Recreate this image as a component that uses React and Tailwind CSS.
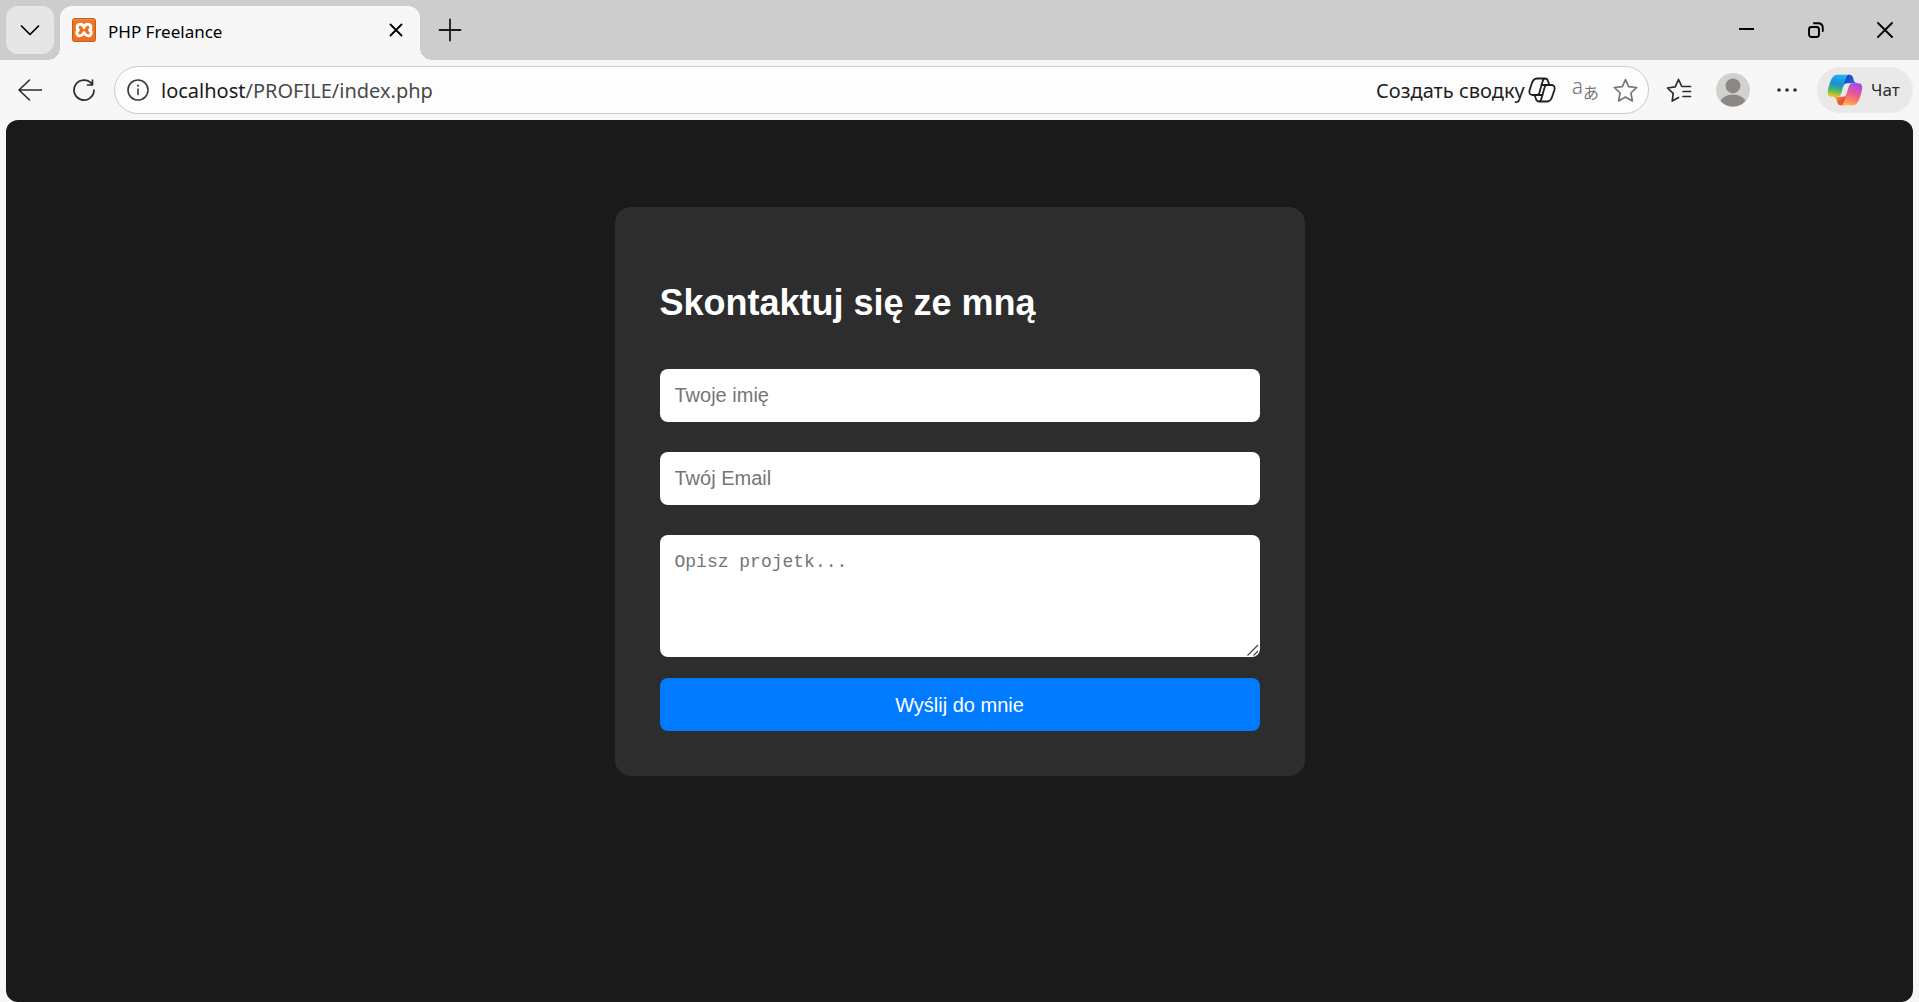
function Stroke({ size, box = "0 0 24 24", width = 1.5, children }) {
  return (
    <svg
      width={size}
      height={size}
      viewBox={box}
      fill="none"
      stroke="currentColor"
      strokeWidth={width}
      strokeLinecap="round"
      strokeLinejoin="round"
      aria-hidden="true"
    >
      {children}
    </svg>
  );
}

const STAR =
  "M12 1.5 L15 8.3 L22.8 9.1 L17.2 14.4 L18.6 22 L12 18.3 L5.4 22 L6.8 14.4 L1.2 9.1 L9 8.3 Z";

function XamppIcon() {
  return (
    <svg width="24" height="24" viewBox="0 0 24 24" aria-hidden="true">
      <defs>
        <linearGradient id="xamppFill" x1="0" y1="0" x2="0" y2="24" gradientUnits="userSpaceOnUse">
          <stop offset="0" stopColor="#e89a62" />
          <stop offset="0.15" stopColor="#f0741f" />
          <stop offset="1" stopColor="#f0701a" />
        </linearGradient>
      </defs>
      <rect x="0.5" y="0.5" width="23" height="23" rx="2" fill="url(#xamppFill)" stroke="#b9632c" />
      <path
        d="M12 9.400 C11.400 8.400 11.200 6.200 8.500 6.200 C5 6.200 4 9.600 6.400 12 C3.600 14.400 4.600 17.800 8 17.800 C11 17.800 11 15.400 12 14.600 C13 15.400 13 17.800 16 17.800 C19.400 17.800 20.400 14.400 17.600 12 C20 9.600 19 6.200 15.500 6.200 C12.800 6.200 12.600 8.400 12 9.400 Z"
        fill="#f0701a"
        stroke="#fff"
        strokeWidth="3"
        strokeLinejoin="round"
      />
      <path d="M9.500 9.500 V14.500 M14.500 9.500 V14.500 M9.500 12 H14.500" stroke="#f0701a" strokeWidth="1.500" fill="none" />
    </svg>
  );
}

function CopilotLogo() {
  return (
    <svg width="36" height="32" viewBox="1 3 46 42" preserveAspectRatio="none" aria-hidden="true">
      <defs>
        <linearGradient id="foldTop" x1="24" y1="6" x2="38" y2="16" gradientUnits="userSpaceOnUse">
          <stop offset="0" stopColor="#1b3fc4" />
          <stop offset="1" stopColor="#2a6be0" />
        </linearGradient>
        <linearGradient id="foldBottom" x1="12" y1="32" x2="24" y2="44" gradientUnits="userSpaceOnUse">
          <stop offset="0" stopColor="#f7a13a" />
          <stop offset="0.5" stopColor="#ee5a3a" />
          <stop offset="1" stopColor="#e2453f" />
        </linearGradient>
        <linearGradient id="ribbonLeft" x1="15" y1="4" x2="10" y2="33" gradientUnits="userSpaceOnUse">
          <stop offset="0" stopColor="#1fb0f0" />
          <stop offset="0.4" stopColor="#1690d8" />
          <stop offset="0.7" stopColor="#4fb568" />
          <stop offset="1" stopColor="#f2cb16" />
        </linearGradient>
        <linearGradient id="ribbonRight" x1="40" y1="15" x2="30" y2="44" gradientUnits="userSpaceOnUse">
          <stop offset="0" stopColor="#9a4cf0" />
          <stop offset="0.45" stopColor="#e8559a" />
          <stop offset="0.75" stopColor="#fb7a68" />
          <stop offset="1" stopColor="#ffb04a" />
        </linearGradient>
      </defs>
      <path
        fill="url(#foldTop)"
        d="M34.142 7.325A4.63 4.63 0 0 0 29.7 4H28.35a4.63 4.63 0 0 0-4.554 3.794L21.48 20.407l.575-1.965a4.63 4.63 0 0 1 4.444-3.33h7.853l3.294 1.282 3.175-1.283h-.926a4.63 4.63 0 0 1-4.443-3.325z"
      />
      <path
        fill="url(#foldBottom)"
        d="M14.33 40.656A4.63 4.63 0 0 0 18.779 44h2.87a4.63 4.63 0 0 0 4.629-4.51l.312-12.163-.654 2.233a4.63 4.63 0 0 1-4.443 3.329h-7.919l-2.823-1.532-3.057 1.532h.912a4.63 4.63 0 0 1 4.447 3.344z"
      />
      <path
        fill="url(#ribbonLeft)"
        d="M29.5 4H13.46c-4.583 0-7.332 6.057-9.165 12.113C2.123 23.29-.72 32.885 7.503 32.885h6.925a4.67 4.67 0 0 0 4.489-3.379 2004 2004 0 0 1 4.766-16.4c.807-2.743 1.48-5.1 2.512-6.566C26.773 5.717 27.737 4 29.5 4"
      />
      <path
        fill="url(#ribbonRight)"
        d="M18.496 44h16.039c4.583 0 7.332-6.058 9.165-12.115 2.172-7.177 5.013-16.775-3.208-16.775h-6.926a4.67 4.67 0 0 0-4.489 3.379 2004 2004 0 0 1-4.766 16.402c-.807 2.743-1.48 5.1-2.512 6.567-.579.822-1.541 2.542-3.303 2.542"
      />
    </svg>
  );
}

function CopilotOutline() {
  return (
    <svg
      width="28"
      height="26"
      viewBox="0 0 28 26"
      fill="none"
      stroke="currentColor"
      strokeWidth="1.8"
      strokeLinecap="round"
      strokeLinejoin="round"
      aria-hidden="true"
    >
      <path d="M17 1.5 H9 C6 1.5 4.6 3.6 3.6 7 L1.6 13 C.8 16 1.8 18 4.6 18 H8.6 C10 18 10.9 17.2 11.3 16 L14.4 5 C14.9 3 15.6 1.5 17 1.5 C18.8 1.5 19.6 2.6 20 4 L20.8 6.4 C21.1 7.4 21.6 8 22.6 8" />
      <path d="M11 24.5 H19 C22 24.5 23.4 22.4 24.4 19 L26.4 13 C27.2 10 26.2 8 23.4 8 H19.4 C18 8 17.1 8.800 16.700 10 L13.600 21 C13.100 23 12.400 24.500 11 24.500 C9.200 24.500 8.400 23.400 8 22 L7.200 19.600 C6.900 18.600 6.400 18 5.400 18" />
      <path d="M13.600 8 H19.400 M8.600 18 H14.400" />
    </svg>
  );
}

function IconButton({ label, className = "", children }) {
  return (
    <button
      type="button"
      aria-label={label}
      className={`flex h-12 shrink-0 items-center justify-center ${className}`}
    >
      {children}
    </button>
  );
}

function TabStrip() {
  return (
    <div className="flex h-[60px] shrink-0 items-center bg-[#cdcdcd] pl-1.5">
      <IconButton label="Карточки" className="w-12 rounded-xl bg-[#e6e6e6] text-black">
        <Stroke size={24} width={1.7}>
          <path d="M3.500 8 L12 16.500 L20.500 8" />
        </Stroke>
      </IconButton>
      <div className="relative ml-1.5 flex h-[54px] w-[360px] items-center self-end rounded-t-xl bg-[#f7f7f7] pb-1.5 pl-3 pr-3">
        <span className="absolute -left-3 bottom-0 size-3 bg-[radial-gradient(circle_at_0_0,transparent_12px,#f7f7f7_12px)]" />
        <span className="absolute -right-3 bottom-0 size-3 bg-[radial-gradient(circle_at_100%_0,transparent_12px,#f7f7f7_12px)]" />
        <XamppIcon />
        <span className="ml-3 grow pt-1 text-[17px] leading-6 text-black">PHP Freelance</span>
        <button type="button" aria-label="Закрыть вкладку" className="flex size-6 items-center justify-center text-black">
          <Stroke size={14} box="0 0 14 14" width={1.8}>
            <path d="M1.500 1.500 L12.500 12.500 M12.500 1.500 L1.500 12.500" />
          </Stroke>
        </button>
      </div>
      <IconButton label="Новая вкладка" className="ml-1.5 w-12 text-[#1a1a1a]">
        <Stroke size={24} width={1.8}>
          <path d="M12 1.500 V22.500 M1.500 12 H22.500" />
        </Stroke>
      </IconButton>
      <div className="ml-auto flex text-black">
        <IconButton label="Свернуть" className="w-[69px]">
          <svg width="16" height="16" aria-hidden="true">
            <path d="M0 7 H15" stroke="currentColor" strokeWidth="2" />
          </svg>
        </IconButton>
        <IconButton label="Восстановить" className="w-[69px]">
          <Stroke size={16} box="0 0 16 16" width={1.900}>
            <rect x="1" y="5" width="10" height="10" rx="2.500" />
            <path d="M6 1.200 H10 Q14.800 1.200 14.800 6 V9" />
          </Stroke>
        </IconButton>
        <IconButton label="Закрыть" className="w-[69px]">
          <Stroke size={16} box="0 0 16 16" width={1.900}>
            <path d="M1 1 L15 15 M15 1 L1 15" />
          </Stroke>
        </IconButton>
      </div>
    </div>
  );
}

function Toolbar() {
  return (
    <div className="flex h-[60px] shrink-0 items-center gap-1.5 px-1.5 text-[#2b2b2b]">
      <IconButton label="Назад" className="w-12">
        <Stroke size={24} width={1.600}>
          <path d="M23.500 12 H1 M11.500 2 L1 12 L11.500 22" />
        </Stroke>
      </IconButton>
      <IconButton label="Обновить" className="w-12">
        <Stroke size={24} width={1.700}>
          <path d="M22 12 A10 10 0 1 1 19.800 5.800 M20.500 2 V7 H15.500" />
        </Stroke>
      </IconButton>
      <div className="flex h-12 min-w-0 grow items-center rounded-full border border-[#cbcbcb] bg-[#fdfdfd] pl-3 pr-2.5">
        <button type="button" aria-label="Сведения о сайте" className="text-[#3b3b3b]">
          <Stroke size={22} box="0 0 22 22" width={1.600}>
            <circle cx="11" cy="11" r="10" />
            <path d="M11 10 V15.500" />
            <path d="M11 6.600 V6.700" strokeWidth="2" />
          </Stroke>
        </button>
        <div className="ml-3 grow pt-0.5 text-[20px] leading-7 text-[#4a4a4a]">
          <span className="text-[#1a1a1a]">localhost</span>/PROFILE/index.php
        </div>
        <button type="button" className="flex items-center gap-[3px] text-[20px] leading-7 text-[#1f1f1f]">
          <span className="pt-0.5">Создать сводку</span>
          <CopilotOutline />
        </button>
        <button
          type="button"
          aria-label="Перевести"
          className="ml-4 flex items-center text-[21px] font-light leading-6 text-[#757575]"
        >
          <span className="pb-2">a</span>
          <span className="pt-1 font-['Noto_Sans_CJK_JP',sans-serif] text-[16px] font-normal">あ</span>
        </button>
        <button type="button" aria-label="Добавить в избранное" className="ml-3.5 text-[#757575]">
          <Stroke size={25} width={1.600}>
            <path d={STAR} />
          </Stroke>
        </button>
      </div>
      <IconButton label="Избранное" className="w-12">
        <svg
          width="26"
          height="25"
          viewBox="0 0 26 25"
          fill="none"
          stroke="currentColor"
          strokeWidth="1.700"
          strokeLinecap="round"
          strokeLinejoin="round"
          aria-hidden="true"
        >
          <path d="M12.500 19.500 L6.200 23 L7.200 15.400 L1.500 10 L9.200 8.800 L12.500 1.500 L15.800 8.500 H24.500 M17 13.500 H24.500 M17 18.500 H24.500" />
        </svg>
      </IconButton>
      <IconButton label="Профиль" className="w-12">
        <svg width="34" height="34" viewBox="0 0 34 34" aria-hidden="true">
          <clipPath id="avatarClip">
            <circle cx="17" cy="17" r="16.500" />
          </clipPath>
          <circle cx="17" cy="17" r="17" fill="#d3d1ce" />
          <g clipPath="url(#avatarClip)" fill="#8c8885">
            <circle cx="17" cy="12.800" r="7.400" />
            <ellipse cx="17" cy="31.500" rx="13.500" ry="10" />
          </g>
        </svg>
      </IconButton>
      <IconButton label="Настройки и прочее" className="w-12">
        <svg width="20" height="4" viewBox="0 0 20 4" fill="currentColor" aria-hidden="true">
          <circle cx="2" cy="2" r="1.800" />
          <circle cx="10" cy="2" r="1.800" />
          <circle cx="18" cy="2" r="1.800" />
        </svg>
      </IconButton>
      <button
        type="button"
        className="flex h-[46px] w-24 shrink-0 items-center gap-2 rounded-full bg-[#e9e9e9] pl-2.5 text-[17px] leading-6"
      >
        <CopilotLogo />
        Чат
      </button>
    </div>
  );
}

function ContactForm() {
  return (
    <form
      className="w-full max-w-[690px] rounded-2xl bg-[#2d2d2d] p-[45px] font-['Liberation_Sans',Arial,sans-serif] text-[20px]"
      onSubmit={(event) => event.preventDefault()}
    >
      <h1 className="mt-[30px] text-4xl font-bold leading-[42px] text-white">Skontaktuj się ze mną</h1>
      <input
        type="text"
        aria-label="Twoje imię"
        placeholder="Twoje imię"
        className="mt-[45px] block h-[53px] w-full rounded-lg bg-white px-[15px] text-black placeholder:text-[#757575]"
      />
      <input
        type="email"
        aria-label="Twój Email"
        placeholder="Twój Email"
        className="mt-[30px] block h-[53px] w-full rounded-lg bg-white px-[15px] text-black placeholder:text-[#757575]"
      />
      <div className="relative mt-[30px]">
        <textarea
          aria-label="Opisz projetk..."
          placeholder="Opisz projetk..."
          className="block h-[122px] w-full resize-y rounded-lg bg-white p-[15px] font-['Liberation_Mono',monospace] text-[18px] leading-6 text-black placeholder:text-[#757575] [&::-webkit-resizer]:bg-transparent"
        />
        <svg
          width="12"
          height="12"
          viewBox="0 0 12 12"
          fill="none"
          stroke="#4d4d4d"
          strokeWidth="1.400"
          className="pointer-events-none absolute bottom-px right-px"
          aria-hidden="true"
        >
          <path d="M0.500 11.500 L11 1 M6.500 11.500 L11 7" />
        </svg>
      </div>
      <button type="submit" className="mt-[21px] block h-[53px] w-full rounded-lg bg-[#007bff] text-white">
        Wyślij do mnie
      </button>
    </form>
  );
}

export default function App() {
  return (
    <div className="flex min-h-screen flex-col bg-[#f7f7f7] font-['Noto_Sans','Open_Sans',sans-serif]">
      <header>
        <TabStrip />
        <Toolbar />
      </header>
      <main className="mx-1.5 flex grow flex-col items-center rounded-xl bg-[#1a1a1a] px-4 pb-12 pt-[87px]">
        <ContactForm />
      </main>
    </div>
  );
}
